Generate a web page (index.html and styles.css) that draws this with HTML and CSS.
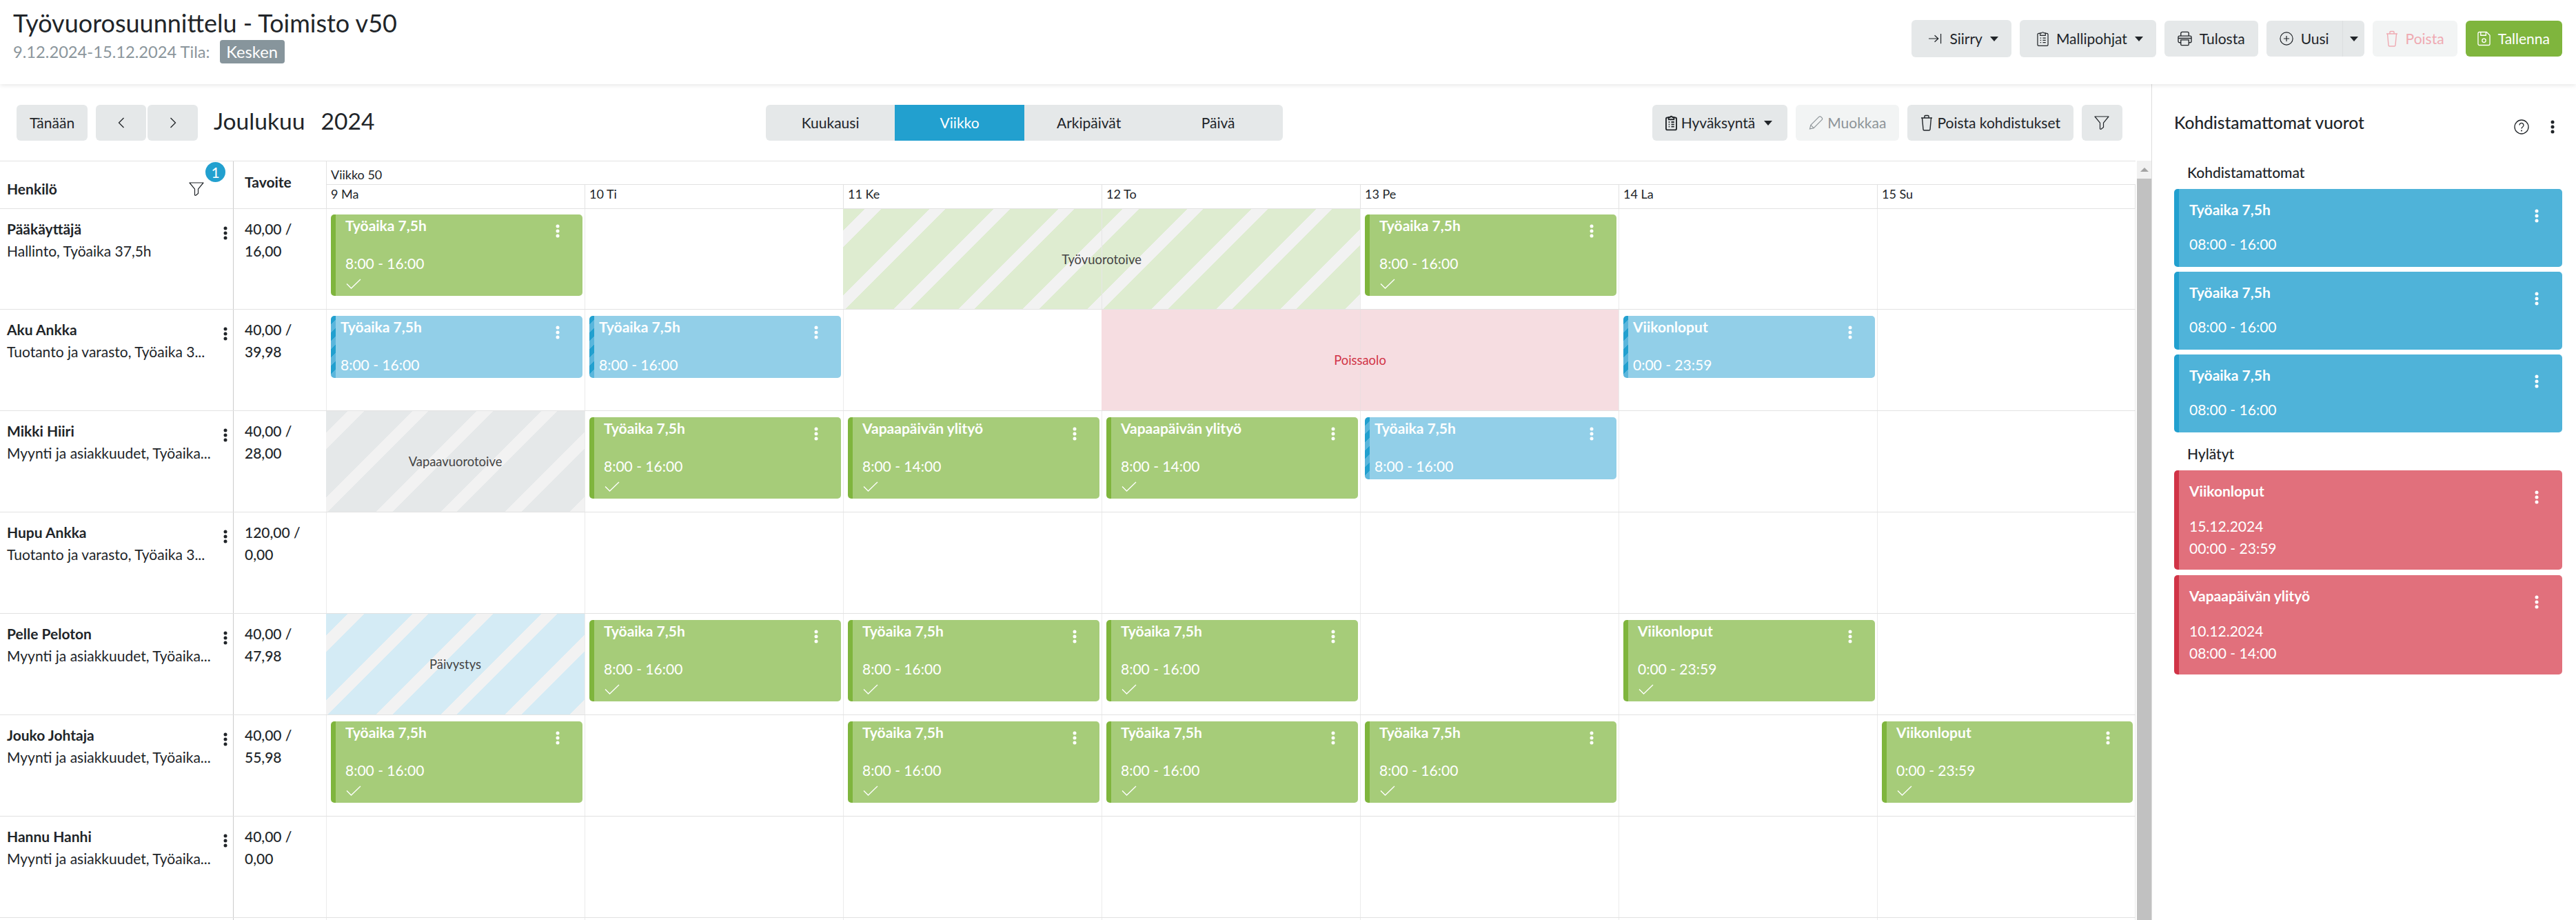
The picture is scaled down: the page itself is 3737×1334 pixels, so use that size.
FILE: index.html
```html
<!DOCTYPE html>
<html lang="fi">
<head>
    <meta charset="UTF-8" />
    <title>Työvuorosuunnittelu</title>
    <link rel="stylesheet" href="styles.css">
</head>
<body>
    <svg class="defs" width="0" height="0">
        <symbol id="i-kebab" viewBox="0 0 6 20"><circle cx="3" cy="3" r="2.5"/><circle cx="3" cy="10" r="2.5"/><circle cx="3" cy="17" r="2.5"/></symbol>
        <symbol id="i-check" viewBox="0 0 22 15"><path d="M1 7.5 7.5 14 21 1" fill="none" stroke="currentColor" stroke-width="1.3"/></symbol>
        <symbol id="i-filter" viewBox="0 0 22 20"><path d="M1 1h20l-7.5 9.2v6.3L10 19.300 8.500 19v-8.800z" fill="none" stroke="currentColor" stroke-width="1.200" stroke-linejoin="round"/></symbol>
        <symbol id="i-goto" viewBox="0 0 20 20"><path d="M0 10h14M9 5l5.500 5L9 15M18.500 2.500v15" fill="none" stroke="currentColor" stroke-width="1.300"/></symbol>
        <symbol id="i-clip" viewBox="0 0 18 24"><path d="M5 4H3a2 2 0 0 0-2 2v15a2 2 0 0 0 2 2h12a2 2 0 0 0 2-2V6a2 2 0 0 0-2-2h-2M5 3.500h2.200a1.900 1.900 0 0 1 3.600 0H13V7H5zM5 11h1.500M9 11h4.500M5 14.500h1.500M9 14.500h4.500M5 18h1.500M9 18h4.500" fill="none" stroke="currentColor" stroke-width="1.300"/></symbol>
        <symbol id="i-clip-bold" viewBox="0 0 18 24"><path d="M5 4H3a2 2 0 0 0-2 2v15a2 2 0 0 0 2 2h12a2 2 0 0 0 2-2V6a2 2 0 0 0-2-2h-2M5 3.500h2.200a1.900 1.900 0 0 1 3.600 0H13V7H5zM5 11h1.500M9 11h4.500M5 14.500h1.500M9 14.500h4.500M5 18h1.500M9 18h4.500" fill="none" stroke="currentColor" stroke-width="2"/></symbol>
        <symbol id="i-print" viewBox="0 0 22 22"><path d="M5 7V3a2 2 0 0 1 2-2h8a2 2 0 0 1 2 2v4M5 17H3a2 2 0 0 1-2-2v-6a2 2 0 0 1 2-2h16a2 2 0 0 1 2 2v6a2 2 0 0 1-2 2h-2M5 13h12v7a1 1 0 0 1-1 1H6a1 1 0 0 1-1-1zM1 10.500h20" fill="none" stroke="currentColor" stroke-width="1.400"/></symbol>
        <symbol id="i-plus" viewBox="0 0 22 22"><circle cx="11" cy="11" r="10" fill="none" stroke="currentColor" stroke-width="1.300"/><path d="M11 6.500v9M6.500 11h9" fill="none" stroke="currentColor" stroke-width="1.300"/></symbol>
        <symbol id="i-trash" viewBox="0 0 18 24"><path d="M1 5h16M6 5V2.500A1 1 0 0 1 7 1.500h4a1 1 0 0 1 1 1V5M2.500 5 4 21.500a1.500 1.500 0 0 0 1.500 1.500h7a1.500 1.500 0 0 0 1.500-1.500L15.500 5" fill="none" stroke="currentColor" stroke-width="1.400"/></symbol>
        <symbol id="i-save" viewBox="0 0 20 22"><path d="M1 3a2 2 0 0 1 2-2h11l5 5v13a2 2 0 0 1-2 2H3a2 2 0 0 1-2-2zM5 1v5h8V1" fill="none" stroke="currentColor" stroke-width="1.400"/><circle cx="10" cy="14" r="2.800" fill="none" stroke="currentColor" stroke-width="1.400"/></symbol>
        <symbol id="i-pencil" viewBox="0 0 22 22"><path d="M1.500 20.500 3 14.500 15.500 2a2.100 2.100 0 0 1 3 0l1.500 1.500a2.100 2.100 0 0 1 0 3L7.500 19zM3 14.500 7.500 19" fill="none" stroke="currentColor" stroke-width="1.200"/></symbol>
        <symbol id="i-help" viewBox="0 0 22 22"><circle cx="11" cy="11" r="10" fill="none" stroke="currentColor" stroke-width="1.300"/><path d="M8 8.500a3 3 0 1 1 4.600 2.500c-1 .7-1.600 1.200-1.600 2.500" fill="none" stroke="currentColor" stroke-width="1.300"/><circle cx="11" cy="16.500" r="1"/></symbol>
        <symbol id="i-left" viewBox="0 0 10 16"><path d="M8.500 1 1.500 8l7 7" fill="none" stroke="currentColor" stroke-width="1.300"/></symbol>
        <symbol id="i-right" viewBox="0 0 10 16"><path d="M1.500 1l7 7-7 7" fill="none" stroke="currentColor" stroke-width="1.300"/></symbol>
    </svg>

    <header class="top">
        <div class="top-title">
            <h1>Työvuorosuunnittelu - Toimisto v50</h1>
            <div class="top-sub">9.12.2024-15.12.2024 Tila: <span class="tag">Kesken</span></div>
        </div>
        <div class="top-btns">
            <a class="btn tall"><svg class="ic w19"><use href="#i-goto"/></svg>Siirry<i class="caret"></i></a>
            <a class="btn tall"><svg class="ic w17"><use href="#i-clip"/></svg>Mallipohjat<i class="caret"></i></a>
            <a class="btn"><svg class="ic w21"><use href="#i-print"/></svg>Tulosta</a>
            <div class="split">
                <a class="btn"><svg class="ic w21"><use href="#i-plus"/></svg>Uusi</a>
                <a class="btn more"><i class="caret"></i></a>
            </div>
            <a class="btn off-red"><svg class="ic w18"><use href="#i-trash"/></svg>Poista</a>
            <a class="btn save"><svg class="ic w19"><use href="#i-save"/></svg>Tallenna</a>
        </div>
    </header>

    <div class="main">
        <section class="calendar">
            <div class="tools">
                <div class="tools-left">
                    <a class="btn today">Tänään</a>
                    <div class="arrows">
                        <a class="btn arrow"><svg class="chev"><use href="#i-left"/></svg></a>
                        <a class="btn arrow"><svg class="chev"><use href="#i-right"/></svg></a>
                    </div>
                    <h2><span>Joulukuu</span><span>2024</span></h2>
                </div>
                <div class="views">
                    <a>Kuukausi</a>
                    <a class="on">Viikko</a>
                    <a>Arkipäivät</a>
                    <a>Päivä</a>
                </div>
                <div class="tools-right">
                    <a class="btn tight approve"><svg class="ic w17"><use href="#i-clip-bold"/></svg>Hyväksyntä<i class="caret"></i></a>
                    <a class="btn tight off"><svg class="ic w21"><use href="#i-pencil"/></svg>Muokkaa</a>
                    <a class="btn tight"><svg class="ic w18"><use href="#i-trash"/></svg>Poista kohdistukset</a>
                    <a class="btn funnel"><svg class="ic w22"><use href="#i-filter"/></svg></a>
                </div>
            </div>

            <div class="cal-wrap">
                <div class="table">
                    <div class="head">
                        <div class="h-person">Henkilö<svg class="h-filter"><use href="#i-filter"/></svg><span class="count">1</span></div>
                        <div class="h-target">Tavoite</div>
                        <div class="h-week">Viikko 50</div>
                        <div class="h-day">9 Ma</div>
                        <div class="h-day">10 Ti</div>
                        <div class="h-day">11 Ke</div>
                        <div class="h-day">12 To</div>
                        <div class="h-day">13 Pe</div>
                        <div class="h-day">14 La</div>
                        <div class="h-day">15 Su</div>
                    </div>

                    <div class="row">
                        <div class="person"><div class="who"><b>Pääkäyttäjä</b><p>Hallinto, Työaika 37,5h</p></div><svg class="kebab"><use href="#i-kebab"/></svg></div>
                        <div class="target">40,00 /<br>16,00</div>
                        <div class="day"><div class="shift ok"><div class="s-top"><span>Työaika 7,5h</span><svg class="dots"><use href="#i-kebab"/></svg></div><div class="s-time">8:00 - 16:00</div><svg class="tick"><use href="#i-check"/></svg></div></div>
                        <div class="day"></div>
                        <div class="mark wish two">Työvuorotoive</div>
                        <div class="day"><div class="shift ok"><div class="s-top"><span>Työaika 7,5h</span><svg class="dots"><use href="#i-kebab"/></svg></div><div class="s-time">8:00 - 16:00</div><svg class="tick"><use href="#i-check"/></svg></div></div>
                        <div class="day"></div>
                        <div class="day"></div>
                    </div>

                    <div class="row">
                        <div class="person"><div class="who"><b>Aku Ankka</b><p>Tuotanto ja varasto, Työaika 3...</p></div><svg class="kebab"><use href="#i-kebab"/></svg></div>
                        <div class="target">40,00 /<br>39,98</div>
                        <div class="day"><div class="shift wait"><div class="s-top"><span>Työaika 7,5h</span><svg class="dots"><use href="#i-kebab"/></svg></div><div class="s-time">8:00 - 16:00</div></div></div>
                        <div class="day"><div class="shift wait"><div class="s-top"><span>Työaika 7,5h</span><svg class="dots"><use href="#i-kebab"/></svg></div><div class="s-time">8:00 - 16:00</div></div></div>
                        <div class="day"></div>
                        <div class="mark away two">Poissaolo</div>
                        <div class="day"><div class="shift wait"><div class="s-top"><span>Viikonloput</span><svg class="dots"><use href="#i-kebab"/></svg></div><div class="s-time">0:00 - 23:59</div></div></div>
                        <div class="day"></div>
                    </div>

                    <div class="row">
                        <div class="person"><div class="who"><b>Mikki Hiiri</b><p>Myynti ja asiakkuudet, Työaika...</p></div><svg class="kebab"><use href="#i-kebab"/></svg></div>
                        <div class="target">40,00 /<br>28,00</div>
                        <div class="mark free">Vapaavuorotoive</div>
                        <div class="day"><div class="shift ok"><div class="s-top"><span>Työaika 7,5h</span><svg class="dots"><use href="#i-kebab"/></svg></div><div class="s-time">8:00 - 16:00</div><svg class="tick"><use href="#i-check"/></svg></div></div>
                        <div class="day"><div class="shift ok"><div class="s-top"><span>Vapaapäivän ylityö</span><svg class="dots"><use href="#i-kebab"/></svg></div><div class="s-time">8:00 - 14:00</div><svg class="tick"><use href="#i-check"/></svg></div></div>
                        <div class="day"><div class="shift ok"><div class="s-top"><span>Vapaapäivän ylityö</span><svg class="dots"><use href="#i-kebab"/></svg></div><div class="s-time">8:00 - 14:00</div><svg class="tick"><use href="#i-check"/></svg></div></div>
                        <div class="day"><div class="shift wait"><div class="s-top"><span>Työaika 7,5h</span><svg class="dots"><use href="#i-kebab"/></svg></div><div class="s-time">8:00 - 16:00</div></div></div>
                        <div class="day"></div>
                        <div class="day"></div>
                    </div>

                    <div class="row">
                        <div class="person"><div class="who"><b>Hupu Ankka</b><p>Tuotanto ja varasto, Työaika 3...</p></div><svg class="kebab"><use href="#i-kebab"/></svg></div>
                        <div class="target">120,00 /<br>0,00</div>
                        <div class="day"></div>
                        <div class="day"></div>
                        <div class="day"></div>
                        <div class="day"></div>
                        <div class="day"></div>
                        <div class="day"></div>
                        <div class="day"></div>
                    </div>

                    <div class="row">
                        <div class="person"><div class="who"><b>Pelle Peloton</b><p>Myynti ja asiakkuudet, Työaika...</p></div><svg class="kebab"><use href="#i-kebab"/></svg></div>
                        <div class="target">40,00 /<br>47,98</div>
                        <div class="mark duty">Päivystys</div>
                        <div class="day"><div class="shift ok"><div class="s-top"><span>Työaika 7,5h</span><svg class="dots"><use href="#i-kebab"/></svg></div><div class="s-time">8:00 - 16:00</div><svg class="tick"><use href="#i-check"/></svg></div></div>
                        <div class="day"><div class="shift ok"><div class="s-top"><span>Työaika 7,5h</span><svg class="dots"><use href="#i-kebab"/></svg></div><div class="s-time">8:00 - 16:00</div><svg class="tick"><use href="#i-check"/></svg></div></div>
                        <div class="day"><div class="shift ok"><div class="s-top"><span>Työaika 7,5h</span><svg class="dots"><use href="#i-kebab"/></svg></div><div class="s-time">8:00 - 16:00</div><svg class="tick"><use href="#i-check"/></svg></div></div>
                        <div class="day"></div>
                        <div class="day"><div class="shift ok"><div class="s-top"><span>Viikonloput</span><svg class="dots"><use href="#i-kebab"/></svg></div><div class="s-time">0:00 - 23:59</div><svg class="tick"><use href="#i-check"/></svg></div></div>
                        <div class="day"></div>
                    </div>

                    <div class="row">
                        <div class="person"><div class="who"><b>Jouko Johtaja</b><p>Myynti ja asiakkuudet, Työaika...</p></div><svg class="kebab"><use href="#i-kebab"/></svg></div>
                        <div class="target">40,00 /<br>55,98</div>
                        <div class="day"><div class="shift ok"><div class="s-top"><span>Työaika 7,5h</span><svg class="dots"><use href="#i-kebab"/></svg></div><div class="s-time">8:00 - 16:00</div><svg class="tick"><use href="#i-check"/></svg></div></div>
                        <div class="day"></div>
                        <div class="day"><div class="shift ok"><div class="s-top"><span>Työaika 7,5h</span><svg class="dots"><use href="#i-kebab"/></svg></div><div class="s-time">8:00 - 16:00</div><svg class="tick"><use href="#i-check"/></svg></div></div>
                        <div class="day"><div class="shift ok"><div class="s-top"><span>Työaika 7,5h</span><svg class="dots"><use href="#i-kebab"/></svg></div><div class="s-time">8:00 - 16:00</div><svg class="tick"><use href="#i-check"/></svg></div></div>
                        <div class="day"><div class="shift ok"><div class="s-top"><span>Työaika 7,5h</span><svg class="dots"><use href="#i-kebab"/></svg></div><div class="s-time">8:00 - 16:00</div><svg class="tick"><use href="#i-check"/></svg></div></div>
                        <div class="day"></div>
                        <div class="day"><div class="shift ok"><div class="s-top"><span>Viikonloput</span><svg class="dots"><use href="#i-kebab"/></svg></div><div class="s-time">0:00 - 23:59</div><svg class="tick"><use href="#i-check"/></svg></div></div>
                    </div>

                    <div class="row">
                        <div class="person"><div class="who"><b>Hannu Hanhi</b><p>Myynti ja asiakkuudet, Työaika...</p></div><svg class="kebab"><use href="#i-kebab"/></svg></div>
                        <div class="target">40,00 /<br>0,00</div>
                        <div class="day"></div>
                        <div class="day"></div>
                        <div class="day"></div>
                        <div class="day"></div>
                        <div class="day"></div>
                        <div class="day"></div>
                        <div class="day"></div>
                    </div>

                    <div class="row">
                        <div class="person"></div>
                        <div class="target"></div>
                        <div class="day"></div>
                        <div class="day"></div>
                        <div class="day"></div>
                        <div class="day"></div>
                        <div class="day"></div>
                        <div class="day"></div>
                        <div class="day"></div>
                    </div>
                </div>
                <div class="scrollbar"><div class="sb-up"><i></i></div><div class="sb-thumb"></div></div>
            </div>
        </section>

        <aside class="side">
            <div class="side-head">
                <h3>Kohdistamattomat vuorot</h3>
                <svg class="help"><use href="#i-help"/></svg>
                <svg class="kebab"><use href="#i-kebab"/></svg>
            </div>
            <h4>Kohdistamattomat</h4>
            <div class="card blue"><div class="c-top"><b>Työaika 7,5h</b><svg class="dots"><use href="#i-kebab"/></svg></div><div class="c-time">08:00 - 16:00</div></div>
            <div class="card blue"><div class="c-top"><b>Työaika 7,5h</b><svg class="dots"><use href="#i-kebab"/></svg></div><div class="c-time">08:00 - 16:00</div></div>
            <div class="card blue"><div class="c-top"><b>Työaika 7,5h</b><svg class="dots"><use href="#i-kebab"/></svg></div><div class="c-time">08:00 - 16:00</div></div>
            <h4 class="rejected">Hylätyt</h4>
            <div class="card red"><div class="c-top"><b>Viikonloput</b><svg class="dots"><use href="#i-kebab"/></svg></div><div class="c-date">15.12.2024</div><div>00:00 - 23:59</div></div>
            <div class="card red"><div class="c-top"><b>Vapaapäivän ylityö</b><svg class="dots"><use href="#i-kebab"/></svg></div><div class="c-date">10.12.2024</div><div>08:00 - 14:00</div></div>
        </aside>
    </div>
</body>
</html>
```

FILE: styles.css
```css
*{
    margin:0;
    padding:0;
    box-sizing:border-box;
}
html,body{
    height:1334px;
    overflow:hidden;
}
body{
    font-family:"Lato","Liberation Sans",sans-serif;
    font-size:21px;
    line-height:32px;
    color:#212529;
    background:#fff;
}
.defs{
    position:absolute;
}

/* header */
.top{
    height:122px;
    display:flex;
    justify-content:space-between;
    padding:0 20px 0 19px;
    box-shadow:0 2px 6px rgba(0,0,0,.09);
    position:relative;
}
.top-title{
    padding-top:14px;
}
.top h1{
    font-size:36px;
    font-weight:400;
    line-height:38px;
}
.top-sub{
    margin-top:6px;
    height:34px;
    display:flex;
    align-items:center;
    color:#8b969c;
    font-size:23.7px;
    white-space:pre;
}
.tag{
    margin-left:8px;
    width:94px;
    height:34px;
    line-height:34px;
    text-align:center;
    color:#fff;
    background:#87959c;
    border-radius:4px;
}
.top-btns{
    display:flex;
    align-items:center;
    gap:12px;
    height:54px;
    margin-top:29px;
}

/* buttons */
.btn{
    height:52px;
    display:flex;
    align-items:center;
    gap:11px;
    padding:0 19px;
    background:#e5e8e9;
    border-radius:6px;
    white-space:nowrap;
}
.btn.tall{
    height:54px;
    padding:0 19px 0 25px;
}
.btn.save{
    background:#7fb53d;
    color:#fff;
    padding:0 18px 0 17px;
}
.btn.off-red{
    background:#f2f4f4;
    color:#efaab2;
}
.btn.off{
    background:#f2f4f4;
    color:#8d9498;
}
.btn.tight{
    gap:6px;
}
.btn.approve{
    padding-right:22px;
}
.approve .caret{
    margin-left:7px;
}
.split{
    display:flex;
}
.split .btn:first-child{
    width:110px;
    border-radius:6px 0 0 6px;
}
.btn.more{
    width:32px;
    padding:0 0 0 10px;
    border-left:1px solid #dcdfe0;
    border-radius:0 6px 6px 0;
}
.caret{
    width:0;
    height:0;
    border-left:6px solid transparent;
    border-right:6px solid transparent;
    border-top:7px solid #212529;
}
.ic{
    height:24px;
    fill:currentColor;
}
.w17{width:17px}
.w18{width:18px}
.w19{width:19px}
.w21{width:21px}
.w22{width:22px}

/* calendar */
.main{
    display:flex;
    height:1212px;
}
.calendar{
    width:3121px;
    flex:none;
}
.tools{
    height:111px;
    padding:30px 42px 0 24px;
    display:flex;
    justify-content:space-between;
    align-items:flex-start;
}
.tools-left{
    display:flex;
    align-items:flex-start;
    width:551px;
}
.today{
    width:103px;
    justify-content:center;
    padding:0;
}
.arrows{
    display:flex;
    gap:2px;
    margin:0 23px 0 12px;
}
.arrow{
    width:73px;
    justify-content:center;
    padding:0;
}
.chev{
    width:10px;
    height:16px;
}
.tools-left h2{
    font-size:33.6px;
    font-weight:400;
    line-height:46px;
    display:flex;
    gap:23px;
}
.views{
    width:750px;
    height:52px;
    display:grid;
    grid-template-columns:repeat(4,1fr);
    background:#e5e8e9;
    border-radius:6px;
    overflow:hidden;
    text-align:center;
    line-height:52px;
}
.views .on{
    background:#22a0cf;
    color:#fff;
}
.tools-right{
    display:flex;
    gap:12px;
}
.funnel{
    width:59px;
    justify-content:center;
    padding:0;
}

.cal-wrap{
    display:flex;
    height:1101px;
}
.table{
    width:3098px;
    flex:none;
    overflow:hidden;
}
.head,.row{
    display:grid;
    grid-template-columns:339px 134px repeat(7,375px);
}
.head{
    grid-template-rows:34px 35px;
    border-top:1px solid #e2e2e2;
    height:70px;
}
.h-person{
    grid-row:1 / span 2;
    border-right:1px solid #ccc;
    border-bottom:1px solid #e2e2e2;
    padding:24px 0 0 10px;
    font-weight:700;
    position:relative;
}
.h-filter{
    position:absolute;
    left:274px;
    top:30px;
    width:22px;
    height:20px;
}
.count{
    position:absolute;
    left:298px;
    top:1px;
    width:29px;
    height:29px;
    line-height:29px;
    border-radius:50%;
    background:#22a0cf;
    color:#fff;
    text-align:center;
    font-weight:400;
}
.h-target{
    grid-row:1 / span 2;
    border-bottom:1px solid #e2e2e2;
    padding:14px 0 0 16px;
    font-weight:700;
}
.h-week{
    grid-column:3 / span 7;
    border-left:1px solid #e2e2e2;
    border-bottom:1px solid #e2e2e2;
    padding-left:6px;
    font-size:18px;
    line-height:39px;
}
.h-day{
    border-left:1px solid #e2e2e2;
    border-bottom:1px solid #e2e2e2;
    padding-left:6px;
    font-size:18px;
    line-height:27px;
}
.h-day:last-child{
    border-right:1px solid #e2e2e2;
}
.row{
    height:147px;
    border-bottom:1px solid #e2e2e2;
}
.head + .row{
    height:146px;
}
.person{
    border-right:1px solid #ccc;
    padding:13px 0 0 10px;
    display:flex;
    align-items:flex-start;
}
.who{
    width:306px;
}
.who b{
    font-weight:700;
    display:block;
}
.who p{
    white-space:nowrap;
}
.person .kebab{
    margin:12px 0 0 8px;
}
.kebab{
    width:6px;
    height:20px;
    fill:#212529;
    flex:none;
}
.target{
    padding:13px 0 0 16px;
    font-weight:500;
}
.day{
    border-left:1px solid #ebebeb;
    padding:9px 3px 0 6px;
}
.head + .row .day{
    padding-top:8px;
}
.day:last-child{
    border-right:1px solid #ebebeb;
}

/* background marks */
.mark{
    --tint:#e5e8e9;
    display:flex;
    align-items:center;
    justify-content:center;
    font-size:18.4px;
    color:#444;
    background:repeating-linear-gradient(135deg,var(--tint) 0 22.6px,#f2f2f2 22.6px 39px,var(--tint) 39px 66.1px);
}
.two{
    grid-column:span 2;
}
.wish{
    --tint:#deecd0;
    background:linear-gradient(#e6e6e6,#e6e6e6) center / 1px 100% no-repeat,
        repeating-linear-gradient(135deg,var(--tint) 0 22.6px,#f2f2f2 22.6px 39px,var(--tint) 39px 66.1px);
}
.duty{
    --tint:#d4ebf5;
}
.away{
    color:#d13447;
    background:linear-gradient(#ecdde0,#ecdde0) center / 1px 100% no-repeat,#f6dde1;
}

/* shifts */
.shift{
    color:#fff;
    border-radius:5px;
    padding-right:33px;
}
.shift.ok{
    height:118px;
    padding-left:21px;
    background:linear-gradient(#7fb53d,#7fb53d) 0 0 / 7px 100% no-repeat,#a6cc79;
}
.shift.wait{
    height:90px;
    padding-left:14px;
    background:repeating-linear-gradient(135deg,#22a0cf 0 8.5px,#5ab6dc 8.5px 17px) 0 0 / 7px 100% no-repeat,#92cfe8;
}
.s-top{
    height:31px;
    display:flex;
    justify-content:space-between;
    align-items:flex-start;
    font-weight:700;
}
.s-time{
    margin-top:24px;
}
.dots{
    width:6px;
    height:20px;
    fill:#fff;
    margin-top:14px;
    flex:none;
}
.tick{
    display:block;
    width:22px;
    height:15px;
    margin:6px 0 0 1px;
    color:#fff;
}

/* scrollbar */
.scrollbar{
    width:21px;
    margin-left:2px;
    flex:none;
}
.sb-up{
    height:26px;
    background:#f1f1f1;
    display:flex;
    justify-content:center;
    align-items:center;
}
.sb-up i{
    border-left:6px solid transparent;
    border-right:6px solid transparent;
    border-bottom:6px solid #a3a3a3;
}
.sb-thumb{
    height:1075px;
    background:#c1c1c1;
}

/* side panel */
.side{
    flex:1;
    border-left:1px solid #ddd;
    padding:38px 20px 0 32px;
}
.side-head{
    display:flex;
    align-items:flex-start;
    height:74px;
}
.side h3{
    font-size:24.5px;
    font-weight:500;
    line-height:36px;
    width:493px;
}
.help{
    width:22px;
    height:22px;
    margin-top:13px;
    fill:#212529;
    color:#212529;
}
.side-head .kebab{
    margin:14px 0 0 31px;
}
.side h4{
    font-size:21px;
    font-weight:500;
    padding-left:19px;
    height:40px;
    line-height:32px;
}
.side h4.rejected{
    margin-top:15px;
}
.card{
    color:#fff;
    border-radius:5px;
    padding:14px 34px 0 22px;
    margin-bottom:7px;
}
.card b{
    font-weight:700;
}
.card.blue{
    height:113px;
    background:linear-gradient(#22a0cf,#22a0cf) 0 0 / 7px 100% no-repeat,#4fb3d9;
}
.card.red{
    height:144px;
    margin-bottom:8px;
    background:linear-gradient(#d13447,#d13447) 0 0 / 7px 100% no-repeat,#e1707c;
}
.c-top{
    height:32px;
    display:flex;
    justify-content:space-between;
    align-items:flex-start;
}
.c-top .dots{
    margin-top:15px;
}
.c-time{
    margin-top:18px;
}
.c-date{
    margin-top:19px;
}
```
